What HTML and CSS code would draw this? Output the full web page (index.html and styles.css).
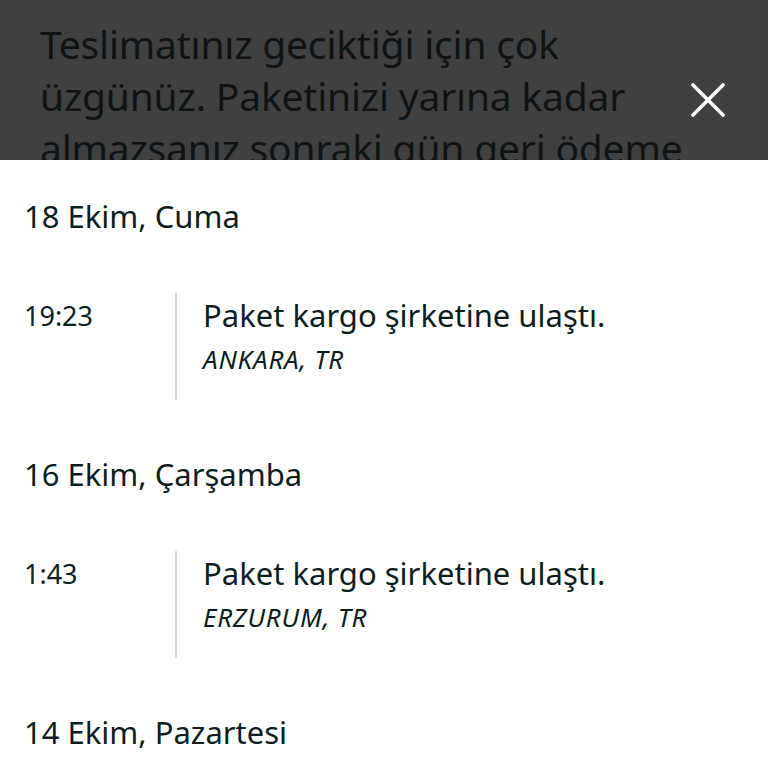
FILE: index.html
```html
<!DOCTYPE html>
<html lang="tr">
<head>
<meta charset="utf-8">
<link rel="stylesheet" href="styles.css">
</head>
<body>
<div class="banner">
  <p class="banner-text">Teslimatınız geciktiği için çok üzgünüz. Paketinizi yarına kadar almazsanız sonraki gün geri ödeme talep edebilirsiniz.</p>
  <div class="close">
    <svg width="36" height="36" viewBox="0 0 36 36"><path d="M3 3 L33 33 M33 3 L3 33" stroke="#ffffff" stroke-width="3.6" stroke-linecap="round" fill="none"/></svg>
  </div>
</div>
<div class="list">
  <section class="day">
    <h2 class="date">18 Ekim, Cuma</h2>
    <div class="event">
      <div class="time">19:23</div>
      <div class="detail">
        <div class="status">Paket kargo şirketine ulaştı.</div>
        <div class="place">ANKARA, TR</div>
      </div>
    </div>
  </section>
  <section class="day">
    <h2 class="date">16 Ekim, Çarşamba</h2>
    <div class="event">
      <div class="time">1:43</div>
      <div class="detail">
        <div class="status">Paket kargo şirketine ulaştı.</div>
        <div class="place">ERZURUM, TR</div>
      </div>
    </div>
  </section>
  <section class="day">
    <h2 class="date">14 Ekim, Pazartesi</h2>
  </section>
</div>
</body>
</html>
```
FILE: styles.css
```css
html, body {
  margin: 0;
  padding: 0;
  background: #ffffff;
}
body {
  font-family: "Noto Sans", "Open Sans", sans-serif;
  color: #0c1d1d;
  width: 768px;
  height: 768px;
  overflow: hidden;
}
.banner {
  height: 160px;
  background: #404040;
  display: flex;
  align-items: flex-start;
  overflow: hidden;
  padding-left: 40px;
}
.banner-text {
  margin: 18px 0 0 0;
  width: 650px;
  flex: none;
  font-size: 39px;
  line-height: 52px;
  letter-spacing: -0.2px;
  color: #101313;
}
.close {
  margin: 82px 0 0 0;
  width: 36px;
  height: 36px;
  flex: none;
}
.close svg { display: block; }
.list {
  padding: 0 24px;
}
.day {
  padding-top: 36px;
}
.date {
  margin: 0;
  font-size: 31px;
  font-weight: normal;
  line-height: 40px;
}
.event {
  display: flex;
  margin-top: 57px;
  margin-bottom: 18px;
}
.time {
  width: 151px;
  flex: none;
  font-size: 27px;
  line-height: 40px;
  padding-top: 3px;
}
.detail {
  border-left: 2px solid #d5d9d9;
  padding-left: 26px;
  height: 107px;
  box-sizing: border-box;
}
.status {
  font-size: 31px;
  line-height: 40px;
  padding-top: 2px;
}
.place {
  margin-top: 8px;
  font-size: 26px;
  font-style: italic;
  line-height: 32px;
  letter-spacing: 0.8px;
}
```
